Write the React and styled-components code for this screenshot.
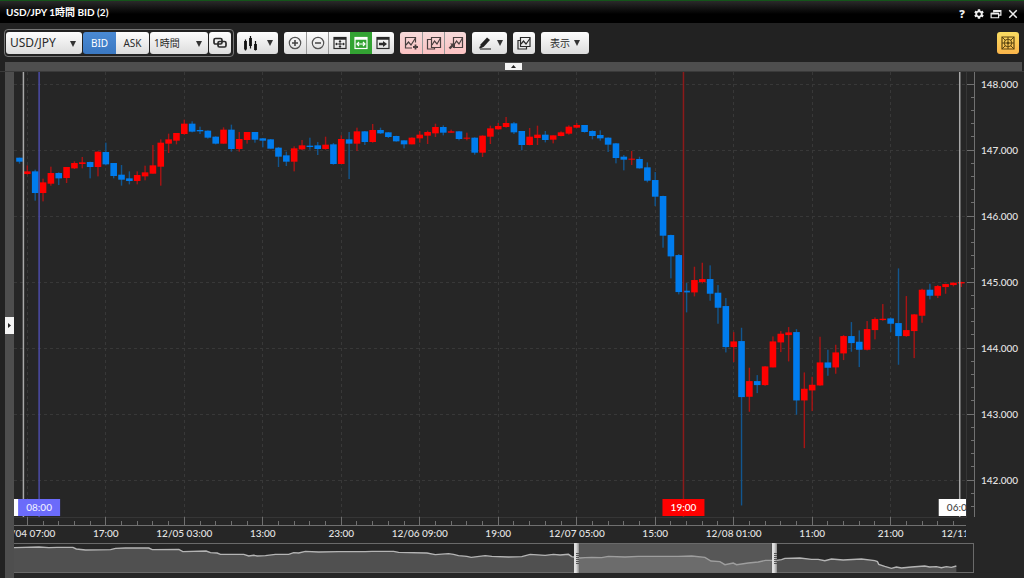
import React, { useEffect, useRef, useState } from "react";
import styled, { createGlobalStyle, css } from "styled-components";
import { MdSettings } from "react-icons/md";

const FONT = `Lato, "Noto Sans CJK JP", sans-serif`;
const CONTROL_FONT = `"Noto Sans", "Noto Sans CJK JP", sans-serif`;

const GlobalStyle = createGlobalStyle`
  * {
    box-sizing: border-box;
  }
  body {
    margin: 0;
    background: #222;
    color: #ddd;
    font-family: ${FONT};
    font-size: 10px;
  }
  button, select {
    font-family: ${CONTROL_FONT};
    font-size: inherit;
    margin: 0;
    padding: 0;
    border: 0;
  }
`;

const Window = styled.div`
  display: flex;
  flex-direction: column;
  min-height: 100vh;
  overflow: hidden;
`;

const TitleBar = styled.header`
  display: flex;
  align-items: center;
  justify-content: space-between;
  height: 23px;
  padding: 0 5px 0 6px;
  border-top: 1px solid #14541a;
  background: linear-gradient(#2a2a2a, #000 60%);
`;

const Title = styled.h1`
  margin: 0;
  color: #fff;
  font-size: 10px;
  font-weight: 700;
  line-height: 16px;
`;

const WindowButtons = styled.div`
  display: flex;
  gap: 5px;
  padding-top: 4px;
`;

const WindowButton = styled.button`
  display: flex;
  align-items: center;
  justify-content: center;
  width: 12px;
  height: 12px;
  background: none;
  color: #eee;
  font-size: 11px;
  font-weight: 900;
  line-height: 12px;
`;

const Toolbar = styled.nav`
  display: flex;
  align-items: center;
  gap: 6px;
  height: 39px;
  padding: 0 5px 0 4px;
  background: #222;
`;

const SymbolGroup = styled.div`
  display: flex;
  gap: 1px;
  padding: 2px 2px 2px 1px;
  margin-right: -3px;
  border: 1px solid #777;
  border-radius: 4px;
`;

const ButtonGroup = styled.div`
  display: flex;
  border-radius: 3px;
  overflow: hidden;
`;

const Spacer = styled.div`
  flex: 1;
`;

const tones = {
  plain: css`
    background: linear-gradient(#fdfdfd, #dcdcdc);
    color: #2a2a2a;
  `,
  blue: css`
    background: linear-gradient(#4a8ad4, #3a78c2);
    color: #fff;
  `,
  green: css`
    background: #33a333;
    color: #fff;
  `,
  pink: css`
    background: linear-gradient(#f6dada, #fcc2c2);
    color: #4a4040;
  `,
  gold: css`
    background: linear-gradient(#f8dc62, #fbb54a);
    color: #5a4510;
  `,
};

const ToolButton = styled.button`
  display: flex;
  align-items: center;
  justify-content: center;
  gap: ${(p) => p.$gap || 4}px;
  height: 22px;
  width: ${(p) => p.$width || 22}px;
  border-radius: ${(p) => (p.$joined ? 0 : 3)}px;
  ${(p) => tones[p.$tone || "plain"]}

  ${ButtonGroup} & + & {
    border-left: 1px solid #999;
  }
`;

const SelectBox = styled.label`
  position: relative;
  display: flex;
  width: ${(p) => p.$width}px;
`;

const Select = styled.select`
  appearance: none;
  width: 100%;
  height: 22px;
  padding-left: 4px;
  border-radius: 3px;
  font-size: ${(p) => p.$size || 10}px;
  ${tones.plain}
`;

const Arrow = styled.span`
  width: 0;
  border: 3px solid transparent;
  border-top: 6px solid #333;
  border-bottom: 0;
`;

const SelectArrow = styled(Arrow)`
  position: absolute;
  right: 6px;
  top: 9px;
  pointer-events: none;
`;

const TopSplitter = styled.div`
  display: flex;
  justify-content: center;
  align-items: center;
  height: 9px;
  margin: 0 2px 0 5px;
  background: #4e4e4e;
`;

const SplitHandle = styled.button`
  display: flex;
  align-items: center;
  justify-content: center;
  width: ${(p) => (p.$vertical ? 9 : 17)}px;
  height: ${(p) => (p.$vertical ? 17 : 7)}px;
  background: #f4f4f4;
`;

const Body = styled.main`
  display: flex;
  flex: 1;
  padding-left: 5px;
  border-top: 1px solid #3a3a3a;
`;

const LeftRail = styled.div`
  display: flex;
  align-items: center;
  width: 9px;
  background: #4e4e4e;
`;

const ChartColumn = styled.section`
  display: flex;
  flex-direction: column;
  flex: 1;
  min-width: 0;
  padding-bottom: 5px;
  background: #262626;
`;

const ChartArea = styled.div`
  position: relative;
  flex: 1;
  min-height: 200px;
`;

const ChartSvg = styled.svg`
  position: absolute;
  inset: 0;
  width: 100%;
  height: 100%;
  font-family: ${FONT};
  font-size: 10px;
  font-weight: 500;
`;

const Navigator = styled.div`
  position: relative;
  height: 30px;
  margin-right: 50px;
  border: 1px solid #6a6a6a;
  border-left: 0;
`;

const NavigatorSvg = styled.svg`
  display: block;
  width: 100%;
  height: 100%;
`;

const NavigatorHandle = styled.button`
  position: absolute;
  top: -1px;
  left: ${(p) => p.$at}%;
  display: flex;
  align-items: center;
  justify-content: flex-end;
  width: 5px;
  height: 30px;
  background: linear-gradient(90deg, #e0e0e0 40%, #8c8c8c);

  &::after {
    content: "";
    width: 3px;
    height: 11px;
    background: repeating-linear-gradient(#555 0 1px, transparent 1px 2px);
  }
`;

// [direction, high, body top, body bottom, low]
// levels are 1/198 yen steps counted down from DATA_TOP
const DATA_TOP = 149.278;
const DATA_STEP = 198;
const BARS = [
  ["d", 474, 474, 486, 492], ["u", 497, 515, 523, 525], ["d", 510, 515, 580, 603],
  ["u", 537, 548, 580, 605], ["u", 501, 520, 552, 558], ["d", 518, 520, 536, 556],
  ["u", 502, 502, 535, 550], ["u", 485, 490, 506, 508], ["u", 472, 488, 493, 506],
  ["d", 486, 487, 502, 536], ["u", 455, 456, 502, 530], ["d", 429, 457, 494, 497],
  ["d", 490, 490, 529, 536], ["d", 496, 525, 540, 558], ["d", 515, 536, 544, 554],
  ["u", 515, 526, 544, 554], ["u", 498, 518, 530, 542], ["u", 436, 497, 522, 522],
  ["u", 419, 429, 501, 558], ["u", 402, 419, 432, 460], ["u", 400, 400, 423, 434],
  ["u", 360, 372, 403, 405], ["d", 365, 372, 396, 398], ["d", 381, 391, 395, 403],
  ["d", 392, 393, 414, 417], ["d", 410, 411, 432, 434], ["u", 383, 390, 432, 432],
  ["d", 375, 390, 448, 456], ["u", 397, 418, 448, 456], ["u", 397, 397, 421, 432],
  ["d", 397, 397, 420, 429], ["d", 415, 416, 423, 443], ["d", 418, 419, 447, 447],
  ["d", 442, 444, 471, 502], ["d", 456, 467, 486, 499], ["u", 440, 446, 486, 515],
  ["u", 421, 437, 449, 451], ["d", 414, 438, 442, 450], ["d", 427, 437, 448, 466],
  ["u", 411, 435, 448, 450], ["d", 430, 434, 493, 495], ["u", 407, 418, 493, 493],
  ["d", 397, 419, 432, 538], ["u", 384, 395, 432, 454], ["d", 394, 395, 427, 436],
  ["u", 373, 391, 427, 429], ["d", 384, 391, 401, 403], ["d", 397, 398, 412, 415],
  ["d", 408, 409, 425, 426], ["d", 422, 422, 434, 446], ["u", 413, 414, 434, 434],
  ["u", 394, 405, 416, 429], ["u", 393, 397, 408, 433], ["u", 372, 382, 401, 412],
  ["d", 377, 382, 399, 407], ["u", 390, 395, 399, 399], ["d", 394, 395, 418, 422],
  ["u", 399, 414, 417, 422], ["d", 413, 414, 459, 465], ["u", 407, 408, 459, 472],
  ["u", 378, 386, 411, 433], ["u", 370, 379, 389, 390], ["u", 352, 370, 382, 384],
  ["d", 367, 371, 398, 403], ["d", 394, 394, 436, 452], ["u", 385, 411, 436, 437],
  ["u", 378, 405, 415, 436], ["d", 394, 405, 421, 428], ["u", 407, 407, 420, 431],
  ["u", 395, 398, 409, 410], ["u", 377, 381, 402, 405], ["u", 370, 376, 384, 385],
  ["d", 376, 376, 397, 399], ["d", 392, 394, 409, 419], ["d", 392, 406, 416, 423],
  ["d", 413, 414, 435, 457], ["d", 430, 431, 475, 491], ["d", 466, 471, 480, 512],
  ["u", 454, 477, 480, 496], ["d", 471, 478, 506, 507], ["d", 488, 503, 543, 548],
  ["d", 517, 541, 591, 619], ["d", 588, 589, 708, 744], ["d", 705, 706, 770, 836],
  ["d", 763, 766, 877, 884], ["d", 850, 873, 878, 938], ["u", 801, 841, 878, 890],
  ["u", 789, 838, 847, 851], ["d", 797, 838, 882, 903], ["d", 856, 879, 924, 972],
  ["d", 895, 919, 1042, 1058], ["u", 997, 1025, 1042, 1087], ["d", 984, 1024, 1192, 1517],
  ["u", 1104, 1144, 1191, 1236], ["d", 1126, 1144, 1156, 1180], ["u", 1099, 1100, 1156, 1158],
  ["u", 1010, 1025, 1103, 1103], ["u", 994, 1002, 1028, 1057], ["u", 982, 998, 1006, 1085],
  ["d", 988, 997, 1202, 1245], ["u", 1118, 1167, 1202, 1345], ["u", 1131, 1155, 1172, 1234],
  ["u", 1011, 1088, 1157, 1158], ["d", 1050, 1088, 1104, 1128], ["u", 1035, 1058, 1103, 1122],
  ["u", 1006, 1009, 1061, 1081], ["d", 967, 1009, 1030, 1056], ["d", 992, 1026, 1050, 1102],
  ["u", 964, 988, 1050, 1052], ["u", 953, 958, 991, 1019], ["u", 913, 957, 961, 963],
  ["d", 953, 956, 972, 997], ["d", 806, 970, 1009, 1095], ["u", 889, 991, 1009, 1011],
  ["u", 943, 944, 994, 1075], ["u", 867, 870, 948, 969], ["d", 852, 870, 888, 899],
  ["u", 856, 859, 888, 895], ["u", 852, 853, 862, 882], ["u", 848, 849, 856, 860],
  ["u", 846, 847, 851, 862],
];

const TIMES = [
  "12/04 07:00", "17:00", "12/05 03:00", "13:00", "23:00", "12/06 09:00", "19:00",
  "12/07 05:00", "15:00", "12/08 01:00", "11:00", "21:00", "12/11 07:00",
];

// the first flag is almost wholly behind the second, so it has no text
const MARKERS = [
  { bar: 0.5, text: "", line: "#a8a8a8", fill: "#fff", color: "#444" },
  { bar: 2.5, text: "08:00", line: "#4c4ca8", fill: "#6b6bfa", color: "#eef" },
  { bar: 84.6, text: "19:00", line: "#8c1a1a", fill: "#f00", color: "#fff" },
  { bar: 119.8, text: "06:00", line: "#a8a8a8", fill: "#fff", color: "#444" },
];

const NAV_LINE =
  "45,206 120,204 150,206 175,205 222,205 232,210 260,213 335,212 350,208 380,207 450,207 460,212 540,211 552,218 622,216 635,221 655,222 665,226 735,226 750,231 765,229 775,231 800,230 830,226 870,226 885,221 900,222 920,217 960,219 1020,218 " +
  "1100,218 1120,217 1185,217 1200,220 1285,222 1310,227 1350,224 1365,226 1380,230 1405,232 1418,235 1460,230 1480,232 1530,234 1570,233 1595,226 1640,229 1665,226 1685,228 1710,226 1720,233 1745,237 1760,236 1780,235 1810,236 1830,232 1880,234 1920,232 " +
  "2040,232 2080,231 2120,235 2138,246 2165,248 2180,257 2205,252 2215,257 2250,252 2280,249 2302,244 2335,244 2350,242 2360,238 2405,237 2440,241 2460,241 2480,245 2500,240 2535,243 2590,240 2630,245 2638,248 2642,256 2660,262 2680,268 2695,264 2710,267 2740,264 2780,261 2795,264 2815,263 2830,266 2845,263 2860,265 2875,261";

const AXIS_WIDTH = 58;
const TIME_HEIGHT = 26;

const useSize = () => {
  const ref = useRef(null);
  const [size, setSize] = useState({ width: 1010, height: 471 });
  useEffect(() => {
    const measure = () => {
      const { clientWidth, clientHeight } = ref.current;
      setSize({ width: clientWidth, height: clientHeight });
    };
    measure();
    const observer = new ResizeObserver(measure);
    observer.observe(ref.current);
    return () => observer.disconnect();
  }, []);
  return [ref, size];
};

const CandleChart = () => {
  const [ref, { width, height }] = useSize();
  const plotW = width - AXIS_WIDTH;
  const plotH = height - TIME_HEIGHT;
  const axisY = plotH + 8;
  const pitch = plotW / 121.3;
  const yen = plotH / 6.74;
  const x = (bar) => (bar + 0.7) * pitch;
  const yPrice = (price) => 12 + (148 - price) * yen;
  const y = (level) => yPrice(DATA_TOP - level / DATA_STEP);
  const snap = (v) => Math.floor(v) + 0.5;

  const prices = [148, 147, 146, 145, 144, 143, 142];
  const minorPrices = [];
  for (let i = 0; i < 33; i++) {
    if (i % 5 !== 0) minorPrices.push(148 - i / 5);
  }
  const minorBars = [];
  for (let i = 3; i < 121; i += 2) {
    if (i % 10 !== 1) minorBars.push(i);
  }

  return (
    <ChartArea ref={ref}>
      <ChartSvg role="img" aria-label="USD/JPY candlestick chart">
        <defs>
          <clipPath id="plot">
            <rect width={plotW} height={height} />
          </clipPath>
        </defs>

        <g stroke="#383838" strokeDasharray="3 3">
          {prices.map((p) => (
            <line key={p} x2={plotW} y1={snap(yPrice(p))} y2={snap(yPrice(p))} />
          ))}
          {TIMES.slice(0, 12).map((t, i) => (
            <line key={t} x1={snap(x(1 + i * 10))} x2={snap(x(1 + i * 10))} y2={plotH} />
          ))}
        </g>
        <path d={`M0 ${plotH + 0.5}H${plotW + 0.5}V0`} fill="none" stroke="#363636" />

        <g clipPath="url(#plot)">
          {BARS.map(([dir, high, top, bottom, low], i) => (
            <g key={i}>
              <rect
                x={x(i) - 0.7}
                y={y(high)}
                width="1.4"
                height={y(low) - y(high)}
                fill={dir === "u" ? "#a81414" : "#12568f"}
              />
              <rect
                x={x(i) - pitch * 0.42}
                y={y(top)}
                width={pitch * 0.84}
                height={Math.max(y(bottom) - y(top), 1)}
                fill={dir === "u" ? "#ff0000" : "#007cee"}
              />
            </g>
          ))}
          {MARKERS.map((m) => (
            <g key={m.bar}>
              <line x1={x(m.bar)} x2={x(m.bar)} y2={plotH} stroke={m.line} strokeWidth="1.5" />
              <rect x={x(m.bar) - 21} y={plotH - 18} width="42" height="17" fill={m.fill} />
              {m.text && (
                <text x={x(m.bar)} y={plotH - 6} textAnchor="middle" fill={m.color}>
                  {m.text}
                </text>
              )}
            </g>
          ))}
          <g stroke="#707070">
            {TIMES.map((t, i) => (
              <line
                key={t}
                x1={snap(x(1 + i * 10))}
                x2={snap(x(1 + i * 10))}
                y1={plotH}
                y2={axisY}
              />
            ))}
            {minorBars.map((b) => (
              <line key={b} x1={snap(x(b))} x2={snap(x(b))} y1={plotH + 4} y2={axisY} />
            ))}
            <line x2={plotW} y1={axisY + 0.5} y2={axisY + 0.5} />
          </g>
          <g fill="#e4e4e4" textAnchor="middle">
            {TIMES.map((t, i) => (
              <text key={t} x={x(1 + i * 10)} y={plotH + 20}>
                {t}
              </text>
            ))}
          </g>
        </g>

        <g stroke="#707070">
          <line x1={plotW + 8.5} x2={plotW + 8.5} y2={plotH} />
          {prices.map((p) => (
            <line
              key={p}
              x1={plotW + 1}
              x2={plotW + 8}
              y1={snap(yPrice(p))}
              y2={snap(yPrice(p))}
            />
          ))}
          {minorPrices.map((p) => (
            <line
              key={p}
              x1={plotW + 5}
              x2={plotW + 8}
              y1={snap(yPrice(p))}
              y2={snap(yPrice(p))}
            />
          ))}
        </g>
        <g fill="#e4e4e4">
          {prices.map((p) => (
            <text key={p} x={plotW + 15} y={yPrice(p) + 4}>
              {p.toFixed(3)}
            </text>
          ))}
        </g>
      </ChartSvg>
    </ChartArea>
  );
};

const RangeNavigator = () => (
  <Navigator>
    <NavigatorSvg viewBox="45 195 2880 84" preserveAspectRatio="none">
      <polygon points={`45,279 ${NAV_LINE} 2875,279`} fill="#505050" />
      <polyline
        points={NAV_LINE}
        fill="none"
        stroke="#b4b4b4"
        strokeWidth="1.4"
        vectorEffect="non-scaling-stroke"
      />
      <rect x="1731" y="195" width="590" height="84" fill="#888" fillOpacity="0.5" />
    </NavigatorSvg>
    <NavigatorHandle $at={58.4} aria-label="Range start" />
    <NavigatorHandle $at={79} aria-label="Range end" />
  </Navigator>
);

const Icon = ({ children, size = 16 }) => (
  <svg
    width={size}
    height={size}
    viewBox="0 0 16 16"
    fill="none"
    stroke="currentColor"
    strokeWidth="1.2"
    aria-hidden="true"
  >
    {children}
  </svg>
);

const LinkIcon = () => (
  <Icon>
    <g strokeWidth="1.7">
      <rect x="2" y="3.5" width="8" height="5.5" rx="1.5" />
      <rect x="6" y="6.5" width="8" height="5.5" rx="1.5" />
    </g>
  </Icon>
);

const CandlesIcon = () => (
  <Icon>
    <path d="M2.500 4.500v11M7.500 1v12.500M12.500 6v9.500" stroke="#111" />
    <path d="M2.500 6v8.500M7.500 3v8M12.500 9v6" stroke="#111" strokeWidth="2.800" />
  </Icon>
);

const CircleIcon = ({ plus }) => (
  <Icon>
    <circle cx="8" cy="8" r="5.7" stroke="#555" />
    <path d={plus ? "M5 8h6M8 5v6" : "M5 8h6"} strokeWidth="1.6" stroke="#444" />
  </Icon>
);

const PaneIcon = ({ children }) => (
  <Icon>
    <rect x="2" y="2.5" width="12" height="11" />
    <path d="M2 3.500h12" strokeWidth="2.400" />
    {children}
  </Icon>
);

const ChartFrame = () => (
  <g>
    <path d="M5.500 2.500h9v10h-9z" />
    <path d="M6 10l2.500-4 2.500 3 3.500-6" />
  </g>
);

const AddChartIcon = () => (
  <Icon>
    <path d="M12.500 7.500v-5H2.500v10.500h6.500" />
    <path d="M3 10l2.500-3 2.500 3 4.500-7" />
    <path d="M12.500 9.500v5M10 12h5" strokeWidth="1.800" />
  </Icon>
);

const OverlapIcon = () => (
  <Icon>
    <path d="M5.500 4.500H1.500v9.500h7v-1.500" />
    <ChartFrame />
  </Icon>
);

const ImportChartIcon = () => (
  <Icon>
    <ChartFrame />
    <path d="M1.500 13.500L5 10" strokeWidth="2.400" />
    <path d="M2 8.500h5v5z" fill="currentColor" stroke="none" />
  </Icon>
);

const StackIcon = () => (
  <Icon>
    <path d="M4.500 5.500H2v8.500h8.500V12" />
    <path d="M4.500 2.500h9.500v9h-9.500z" />
    <path d="M5 9l2.500-3 2.500 3 4-5.500" />
  </Icon>
);

const PenIcon = () => (
  <Icon>
    <path d="M3.500 9.500L10 2.500l3 2.500-6.500 7H3.500z" fill="#222" stroke="none" />
    <path d="M3 11l3 1.500-4 1z" fill="#222" stroke="none" />
    <path d="M3 14h11" stroke="#333" />
  </Icon>
);

const CrosshairIcon = () => (
  <Icon>
    <path d="M2 2h12v12H2z" />
    <g strokeWidth="1">
      <path d="M8 2v12M2 8h12M2 2l3.500 3.500M14 2l-3.500 3.500M2 14l3.500-3.500M14 14l-3.500-3.500" />
      <circle cx="8" cy="8" r="3.800" />
    </g>
    <circle cx="8" cy="8" r="1.300" fill="currentColor" stroke="none" />
  </Icon>
);

const RestoreIcon = () => (
  <Icon size={12}>
    <g strokeWidth="1.600">
      <path d="M5 6V3.500h9.500v6H12" />
      <path d="M1.500 7h10v6h-10z" />
      <path d="M1.500 7.500h10M5 4h9.500" strokeWidth="2.600" />
    </g>
  </Icon>
);

const CloseIcon = () => (
  <Icon size={12}>
    <path d="M3 3l10 10M13 3L3 13" strokeWidth="2" />
  </Icon>
);

const App = () => (
  <Window>
    <GlobalStyle />
    <TitleBar>
      <Title>USD/JPY 1時間 BID (2)</Title>
      <WindowButtons>
        <WindowButton aria-label="Help">?</WindowButton>
        <WindowButton aria-label="Settings">
          <MdSettings size={12} />
        </WindowButton>
        <WindowButton aria-label="Restore">
          <RestoreIcon />
        </WindowButton>
        <WindowButton aria-label="Close">
          <CloseIcon />
        </WindowButton>
      </WindowButtons>
    </TitleBar>

    <Toolbar>
      <SymbolGroup>
        <SelectBox $width={76}>
          <Select $size={12} aria-label="Currency pair">
            <option>USD/JPY</option>
          </Select>
          <SelectArrow />
        </SelectBox>
        <ButtonGroup>
          <ToolButton $joined $tone="blue" $width={33}>
            BID
          </ToolButton>
          <ToolButton $joined $width={33}>
            ASK
          </ToolButton>
        </ButtonGroup>
        <SelectBox $width={58}>
          <Select aria-label="Period">
            <option>1時間</option>
          </Select>
          <SelectArrow />
        </SelectBox>
        <ToolButton aria-label="Link charts">
          <LinkIcon />
        </ToolButton>
      </SymbolGroup>

      <ToolButton $width={41} $gap={8} aria-label="Chart type">
        <CandlesIcon />
        <Arrow />
      </ToolButton>

      <ButtonGroup>
        <ToolButton $joined aria-label="Zoom in">
          <CircleIcon plus />
        </ToolButton>
        <ToolButton $joined aria-label="Zoom out">
          <CircleIcon />
        </ToolButton>
        <ToolButton $joined aria-label="Fit all">
          <PaneIcon>
            <path d="M4 9h8M8 5.500v7" strokeWidth="1" />
            <path
              d="M3 9l2-1.500v3zM13 9l-2-1.500v3zM8 13l-1.500-2h3zM8 5l-1.500 2h3z"
              fill="currentColor"
              stroke="none"
            />
          </PaneIcon>
        </ToolButton>
        <ToolButton $joined $tone="green" aria-label="Fit width">
          <PaneIcon>
            <path d="M4 9h8M6 7L4 9l2 2M10 7l2 2-2 2" />
          </PaneIcon>
        </ToolButton>
        <ToolButton $joined aria-label="Scroll to latest">
          <PaneIcon>
            <path d="M4 9h4" strokeWidth="2.400" />
            <path d="M8 6l4 3-4 3z" fill="currentColor" stroke="none" />
          </PaneIcon>
        </ToolButton>
      </ButtonGroup>

      <ButtonGroup>
        <ToolButton $joined $tone="pink" aria-label="Add indicator">
          <AddChartIcon />
        </ToolButton>
        <ToolButton $joined $tone="pink" aria-label="Overlay chart">
          <OverlapIcon />
        </ToolButton>
        <ToolButton $joined $tone="pink" aria-label="Import indicator">
          <ImportChartIcon />
        </ToolButton>
      </ButtonGroup>

      <ToolButton $width={35} aria-label="Draw">
        <PenIcon />
        <Arrow />
      </ToolButton>
      <ToolButton aria-label="Duplicate chart">
        <StackIcon />
      </ToolButton>
      <ToolButton $width={48}>
        表示
        <Arrow />
      </ToolButton>
      <Spacer />
      <ToolButton $tone="gold" aria-label="Crosshair">
        <CrosshairIcon />
      </ToolButton>
    </Toolbar>

    <TopSplitter>
      <SplitHandle aria-label="Collapse toolbar">
        <svg width="5" height="3" aria-hidden="true">
          <path d="M0 3L2.500 0 5 3z" fill="#222" />
        </svg>
      </SplitHandle>
    </TopSplitter>

    <Body>
      <LeftRail>
        <SplitHandle $vertical aria-label="Open side panel">
          <svg width="3" height="5" aria-hidden="true">
            <path d="M0 0L3 2.500 0 5z" fill="#222" />
          </svg>
        </SplitHandle>
      </LeftRail>
      <ChartColumn>
        <CandleChart />
        <RangeNavigator />
      </ChartColumn>
    </Body>
  </Window>
);

export default App;
